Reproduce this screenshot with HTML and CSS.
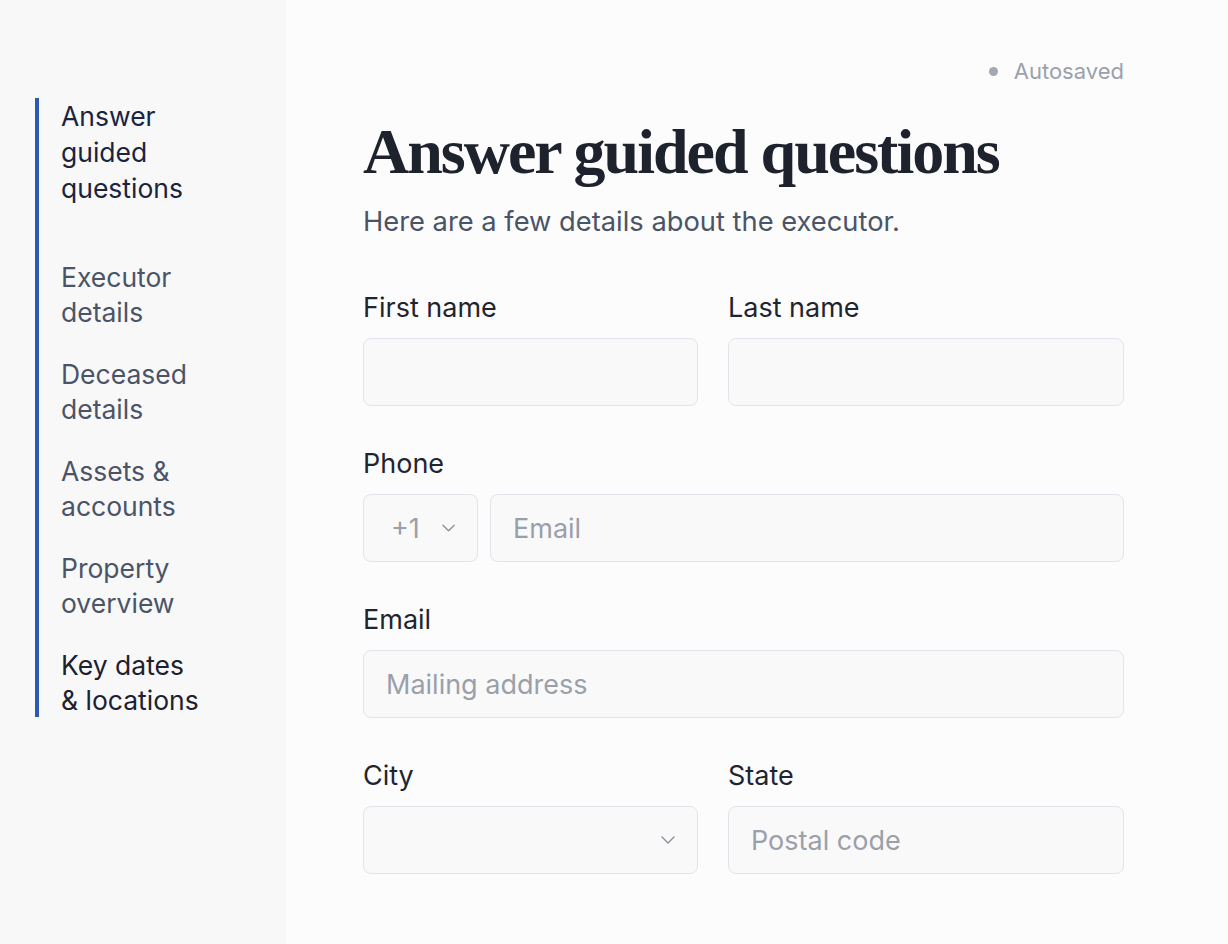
FILE: index.html
```html
<!DOCTYPE html>
<html>

<head>
    <title>Answer guided questions</title>
    <link rel="stylesheet" href="styles.css">
</head>

<body>
    <div class="page">
        <nav class="sidebar">
            <ul class="steps">
                <li class="step current">Answer<br>guided<br>questions</li>
                <li class="step">Executor<br>details</li>
                <li class="step">Deceased<br>details</li>
                <li class="step">Assets &amp;<br>accounts</li>
                <li class="step">Property<br>overview</li>
                <li class="step dark">Key dates<br>&amp; locations</li>
            </ul>
        </nav>

        <main class="main">
            <div class="status"><span class="dot"></span>Autosaved</div>
            <h1 class="title">Answer guided questions</h1>
            <p class="intro">Here are a few details about the executor.</p>

            <form class="form">
                <div class="row two">
                    <label class="field">
                        <span class="label">First name</span>
                        <input class="input" type="text">
                    </label>
                    <label class="field">
                        <span class="label">Last name</span>
                        <input class="input" type="text">
                    </label>
                </div>

                <div class="field">
                    <span class="label">Phone</span>
                    <div class="phone">
                        <div class="input select code">+1 <svg class="chev" viewBox="0 0 14 8" width="14" height="8"><path d="M1 1l6 6 6-6" fill="none" stroke="#8a909b" stroke-width="1.4" stroke-linecap="round" stroke-linejoin="round"/></svg></div>
                        <input class="input" type="text" placeholder="Email">
                    </div>
                </div>

                <label class="field">
                    <span class="label">Email</span>
                    <input class="input" type="text" placeholder="Mailing address">
                </label>

                <div class="row two">
                    <div class="field">
                        <span class="label">City</span>
                        <div class="input select city"><svg class="chev" viewBox="0 0 14 8" width="14" height="8"><path d="M1 1l6 6 6-6" fill="none" stroke="#8a909b" stroke-width="1.4" stroke-linecap="round" stroke-linejoin="round"/></svg></div>
                    </div>
                    <label class="field">
                        <span class="label">State</span>
                        <input class="input" type="text" placeholder="Postal code">
                    </label>
                </div>
            </form>
        </main>
    </div>
</body>

</html>
```

FILE: styles.css
```css
html,
body {
    margin: 0;
    padding: 0;
    height: 100%;
    font-family: Inter, "Noto Sans", sans-serif;
    background: #fcfcfc;
}

.page {
    display: flex;
    min-height: 944px;
}

/* left step list */
.sidebar {
    width: 286px;
    flex-shrink: 0;
    background: #f8f8f8;
    padding: 98px 0 0 35px;
    box-sizing: border-box;
}

.steps {
    list-style: none;
    margin: 0;
    padding: 0 0 0 22px;
    border-left: 4px solid #2b59b3;
    width: 220px;
    display: flex;
    flex-direction: column;
    gap: 28px;
}

.step {
    font-size: 26.5px;
    line-height: 34.5px;
    color: #4b5467;
}

.step.current {
    color: #1a2340;
    line-height: 36px;
    margin-bottom: 26px;
}

.step.dark {
    color: #1c2130;
}

/* main column */
.main {
    flex: 1;
    padding: 58px 104px 0 77px;
    box-sizing: border-box;
}

.status {
    display: flex;
    justify-content: flex-end;
    align-items: center;
    gap: 16px;
    font-size: 22px;
    line-height: 27px;
    color: #9aa1ad;
}

.dot {
    width: 9px;
    height: 9px;
    border-radius: 50%;
    background: #a3a9b4;
}

.title {
    font-family: "Liberation Serif", serif;
    font-weight: bold;
    font-size: 64px;
    letter-spacing: -2px;
    color: #1d222c;
    margin: 32px 0 0;
    line-height: 70px;
}

.intro {
    font-size: 27.3px;
    line-height: 34px;
    color: #4b5467;
    margin: 18px 0 0;
}

.form {
    margin-top: 53px;
    display: flex;
    flex-direction: column;
    gap: 42px;
}

.row.two {
    display: grid;
    grid-template-columns: 335px 1fr;
    gap: 30px;
}

.field {
    display: flex;
    flex-direction: column;
    gap: 14px;
}

.label {
    font-size: 27px;
    color: #1f2530;
    line-height: 32px;
}

.input {
    height: 68px;
    box-sizing: border-box;
    border: 1.5px solid #e1e4ea;
    border-radius: 8px;
    background: #f9f9fa;
    padding: 0 22px;
    font-family: inherit;
    font-size: 27px;
    color: #1f2530;
    outline: none;
    width: 100%;
}

.input::placeholder {
    color: #9aa0aa;
}

.phone {
    display: flex;
    gap: 12px;
}

.select {
    display: flex;
    align-items: center;
    gap: 22px;
}

.code {
    width: 115px;
    flex-shrink: 0;
    color: #9aa0aa;
    padding-left: 27px;
}

.city {
    justify-content: flex-end;
    padding-right: 22px;
}
```
